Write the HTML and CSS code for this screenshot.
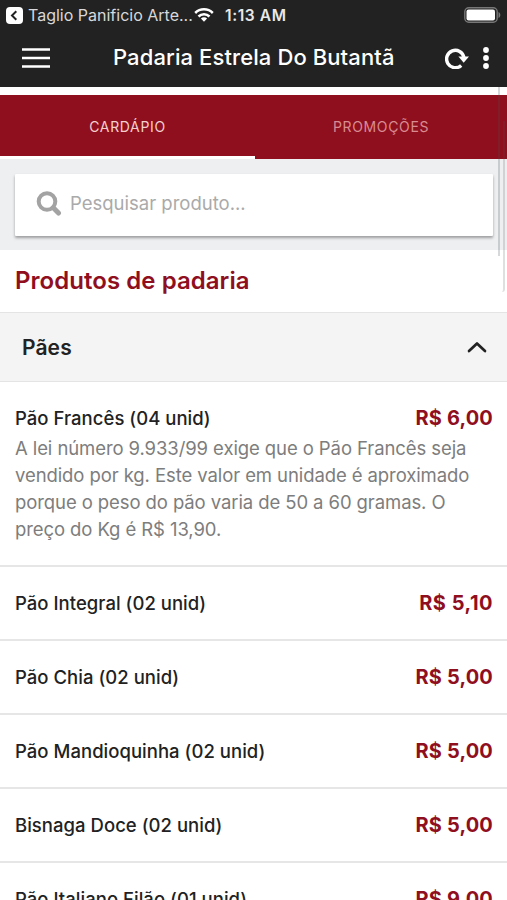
FILE: index.html
```html
<!DOCTYPE html>
<html lang="pt-BR">
<head>
<meta charset="utf-8">
<title>Padaria Estrela Do Butantã</title>
<link rel="stylesheet" href="styles.css">
</head>
<body>
<div class="app">
  <header class="top">
    <div class="status">
      <svg class="back" width="17" height="17" viewBox="0 0 17 17"><rect width="17" height="17" rx="4" fill="#fff"/><path d="M10.3 4.2 6 8.5l4.3 4.3" fill="none" stroke="#222" stroke-width="2"/></svg>
      <span class="status-app">Taglio Panificio Arte...</span>
      <svg class="wifi" width="20" height="14" viewBox="0 0 20 14"><g fill="none" stroke="#fff" stroke-width="2.5"><path d="M1.2 5a12.4 12.4 0 0 1 17.6 0"/><path d="M4.5 8.5a7.8 7.8 0 0 1 11 0"/></g><path d="M10 13.7 6.9 10.6a4.4 4.4 0 0 1 6.2 0z" fill="#fff"/></svg>
      <span class="clock">1:13 AM</span>
      <svg class="battery" width="37" height="16" viewBox="0 0 37 16"><rect x=".8" y=".8" width="32.4" height="14.4" rx="4" fill="none" stroke="#777" stroke-width="1.4"/><rect x="2.5" y="2.5" width="28.5" height="11" rx="2" fill="#fff"/><path d="M34.5 5v6c2.4-1 2.4-5 0-6z" fill="#777"/></svg>
    </div>
    <nav class="nav">
      <svg class="menu" width="28" height="20" viewBox="0 0 28 20"><path d="M0 1.5h28M0 10h28M0 18.5h28" stroke="#fff" stroke-width="2.5"/></svg>
      <h1 class="title">Padaria Estrela Do Butantã</h1>
      <svg class="reload" width="24" height="22" viewBox="0 0 24 22"><path d="M16.2 18.4A8.7 8.7 0 1 1 18.9 10.5" fill="none" stroke="#fff" stroke-width="3.4"/><path d="M13.4 9.6H24L18.7 15.8z" fill="#fff"/></svg>
      <svg class="dots" width="6" height="22" viewBox="0 0 6 22"><g fill="#fff"><circle cx="3" cy="3" r="2.9"/><circle cx="3" cy="11" r="2.9"/><circle cx="3" cy="19" r="2.9"/></g></svg>
    </nav>
  </header>
  <div class="tabs">
    <div class="tab active">CARDÁPIO</div>
    <div class="tab">PROMOÇÕES</div>
  </div>
  <div class="search">
    <div class="search-box">
      <svg width="26" height="26" viewBox="0 0 26 26"><g fill="none" stroke="#a3a3a3"><circle cx="11" cy="10.5" r="8.3" stroke-width="4"/><path d="m17.3 16.8 5.2 5.2" stroke-width="5" stroke-linecap="round"/></g></svg>
      <span class="placeholder">Pesquisar produto...</span>
    </div>
  </div>
  <h2 class="category">Produtos de padaria</h2>
  <div class="group">
    <h3 class="group-name">Pães</h3>
    <svg width="20" height="12" viewBox="0 0 20 12"><path d="m2 10 8-7.6 8 7.6" fill="none" stroke="#222" stroke-width="2.7" stroke-linecap="round" stroke-linejoin="round"/></svg>
  </div>
  <ul class="list">
    <li class="item first">
      <div class="row"><span class="name">Pão Francês (04 unid)</span><span class="price">R$ 6,00</span></div>
      <p class="desc">A lei número 9.933/99 exige que o Pão Francês seja<br>vendido por kg. Este valor em unidade é aproximado<br>porque o peso do pão varia de 50 a 60 gramas. O<br>preço do Kg é R$ 13,90.</p>
    </li>
    <li class="item"><div class="row"><span class="name">Pão Integral (02 unid)</span><span class="price price-narrow">R$ 5,10</span></div></li>
    <li class="item"><div class="row"><span class="name">Pão Chia (02 unid)</span><span class="price">R$ 5,00</span></div></li>
    <li class="item"><div class="row"><span class="name">Pão Mandioquinha (02 unid)</span><span class="price">R$ 5,00</span></div></li>
    <li class="item"><div class="row"><span class="name">Bisnaga Doce (02 unid)</span><span class="price">R$ 5,00</span></div></li>
    <li class="item"><div class="row"><span class="name">Pão Italiano Filão (01 unid)</span><span class="price">R$ 9,00</span></div></li>
  </ul>
  <div class="edge edge-a"></div>
  <div class="edge edge-b"></div>
</div>
</body>
</html>
```
FILE: styles.css
```css
* { box-sizing: border-box; margin: 0; padding: 0; }
body { background: #fff; font-family: Inter, "Liberation Sans", sans-serif; color: #222; }
.app { position: relative; width: 507px; height: 900px; overflow: hidden; white-space: nowrap; }
svg { display: block; flex: none; }
.top { height: 87px; background: #222; color: #fff; }
.status { display: flex; align-items: center; height: 30px; padding: 0 8px 0 6px; }
.status-app { margin-left: 5px; width: 166px; font-size: 16px; color: #d8d8d8; }
.clock { margin-left: 11px; font-size: 15.5px; font-weight: 600; letter-spacing: .6px; color: #e8e8e8; }
.battery { margin-left: auto; margin-right: -2px; }
.nav { display: flex; align-items: center; height: 55px; padding: 0 18px 0 22px; }
.title { margin-left: 63px; padding-bottom: 1px; font-size: 22px; font-weight: 500; letter-spacing: .1px; }
.reload { margin-left: auto; margin-right: 14px; }
.tabs { display: flex; height: 64px; margin-top: 8px; background: #900f1e; }
.tab { display: flex; flex: 1; align-items: center; justify-content: center; padding-bottom: 1px; font-size: 14px; letter-spacing: .65px; color: #d98b91; }
.active { flex: 0 0 255px; color: #f3cfcf; border-bottom: 3px solid #fff; padding: 2px 0 0; }
.search { height: 91px; padding: 15px 14px 0 15px; background: #eeeff1; }
.search-box { display: flex; align-items: center; height: 62px; padding: 0 0 5px 21px; background: #fff; border-radius: 1px; box-shadow: 0 2px 3px rgba(0,0,0,.35); }
.placeholder { margin-left: 8px; font-size: 18.5px; color: #aaa; }
.search-box svg { position: relative; top: 1px; }
.category { height: 62px; padding-left: 15px; line-height: 61px; font-size: 24px; font-weight: 600; letter-spacing: .05px; color: #900f1e; }
.group { display: flex; align-items: center; justify-content: space-between; height: 70px; padding: 0 20px 0 22px; background: #f4f4f4; border: solid #e4e4e4; border-width: 1.5px 0; }
.group-name { font-size: 21px; font-weight: 600; letter-spacing: .1px; }
.list { list-style: none; }
.item { height: 74px; padding: 24px 14px 0 15px; border-bottom: 2px solid #e6e6e6; }
.first { height: 185px; }
.row { display: flex; align-items: center; justify-content: space-between; height: 24px; }
.name { font-size: 18.5px; font-weight: 500; letter-spacing: .03px; }
.price { font-size: 20px; font-weight: 700; letter-spacing: .15px; color: #900f1e; }
.price-narrow { letter-spacing: .5px; }
.desc { padding-top: 5px; font-size: 18.5px; line-height: 27px; letter-spacing: -.09px; color: #7d7d7d; }
.edge { position: absolute; right: 7px; top: 87px; width: 2px; height: 169px; background: rgba(70,80,80,.22); }
.edge-b { right: 2px; top: 121px; width: 5px; height: 171px; background: none; border-right: 2px solid rgba(70,80,80,.18); border-radius: 0 0 3px 0; }
```
